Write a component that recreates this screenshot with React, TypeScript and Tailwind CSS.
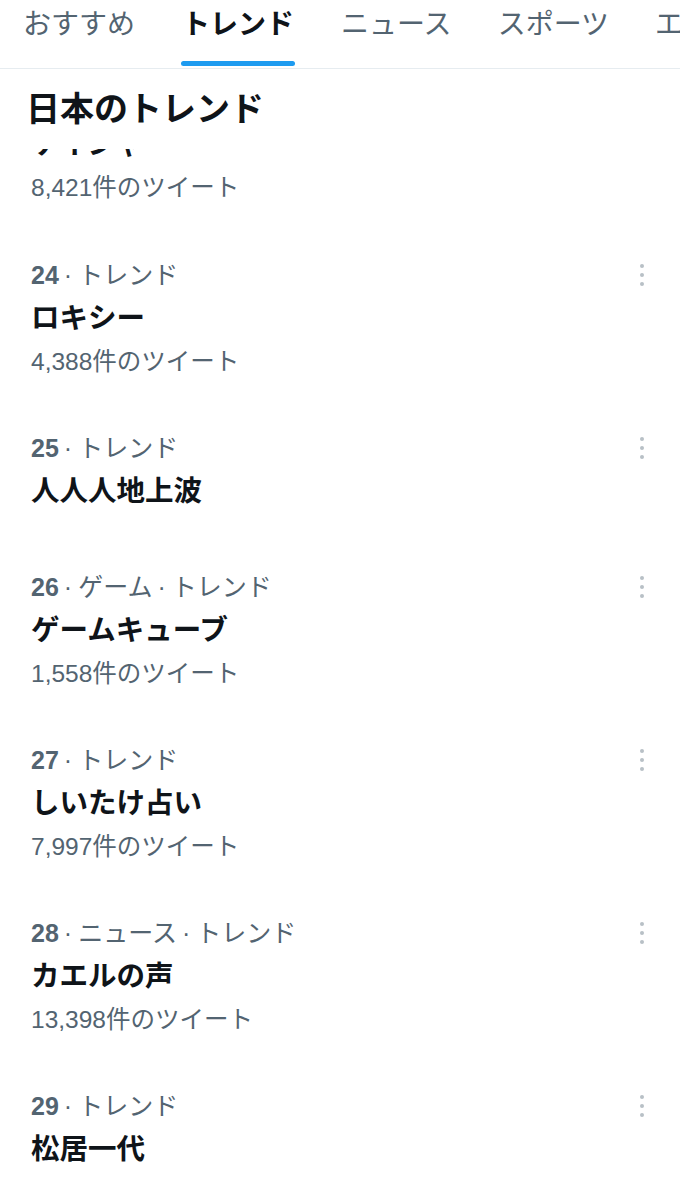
import { Fragment } from "react";

const font = { fontFamily: '"Liberation Sans", "Noto Sans CJK JP", sans-serif' };

type Trend = {
  rank: number;
  tags: string[];
  title: string;
  count?: string;
};

const trends: Trend[] = [
  { rank: 24, tags: ["トレンド"], title: "ロキシー", count: "4,388件のツイート" },
  { rank: 25, tags: ["トレンド"], title: "人人人地上波" },
  { rank: 26, tags: ["ゲーム", "トレンド"], title: "ゲームキューブ", count: "1,558件のツイート" },
  { rank: 27, tags: ["トレンド"], title: "しいたけ占い", count: "7,997件のツイート" },
  { rank: 28, tags: ["ニュース", "トレンド"], title: "カエルの声", count: "13,398件のツイート" },
  { rank: 29, tags: ["トレンド"], title: "松居一代" },
];

const tabs = ["おすすめ", "トレンド", "ニュース", "スポーツ", "エンタメ"];

function MoreIcon() {
  return (
    <div className="flex flex-col items-center gap-[4.5px] pt-[4px]">
      <span className="w-[4.5px] h-[4.5px] rounded-full bg-[#b8c0c6]" />
      <span className="w-[4.5px] h-[4.5px] rounded-full bg-[#b8c0c6]" />
      <span className="w-[4.5px] h-[4.5px] rounded-full bg-[#b8c0c6]" />
    </div>
  );
}

function TrendItem({ trend }: { trend: Trend }) {
  return (
    <div className="flex pl-[31px] pr-[36px] pt-[23px] pb-[20px] min-h-[139px]">
      <div className="flex-1 flex flex-col">
        <div className="h-[44px] leading-[44px] text-[25px] text-[#536471] whitespace-nowrap">
          <span className="font-bold">{trend.rank}</span>
          {trend.tags.map((t) => (
            <Fragment key={t}>
              <span className="ml-[5px] mr-[6px]">·</span>
              <span>{t}</span>
            </Fragment>
          ))}
        </div>
        <div className="h-[43px] leading-[43px] text-[28.5px] font-semibold text-[#0f1419]">{trend.title}</div>
        {trend.count && (
          <div className="h-[43px] leading-[43px] text-[24.5px] text-[#536471]">{trend.count}</div>
        )}
      </div>
      <div className="h-[44px] flex items-center -mt-[2px]">
        <MoreIcon />
      </div>
    </div>
  );
}

export default function App() {
  return (
    <div className="w-[680px] h-[1194px] overflow-hidden bg-white" style={font}>
      {/* tabs */}
      <div className="flex h-[69px] pl-[23px] gap-[46px] border-b border-[#e6ecf0] overflow-hidden">
        {tabs.map((t, i) => (
          <div key={t} className="flex flex-col items-center shrink-0">
            <div
              className={
                "h-[50px] leading-[50px] text-[28px] whitespace-nowrap " +
                (i === 1 ? "font-semibold text-[#0f1419]" : "text-[#536471]")
              }
            >
              {t}
            </div>
            {i === 1 && <div className="mt-[11px] h-[5px] w-[114px] rounded-full bg-[#1d9bf0]" />}
          </div>
        ))}
      </div>

      {/* heading */}
      <div className="h-[80px] pl-[26px] pb-[1px] flex items-center">
        <h2 className="text-[34px] font-semibold text-[#0f1419] leading-none">日本のトレンド</h2>
      </div>

      {/* previous item, scrolled under the heading */}
      <div className="h-[81px] overflow-hidden flex flex-col justify-end pl-[31px] pb-[21px]">
        <div className="h-[43px] leading-[43px] text-[28.5px] font-semibold text-[#0f1419] shrink-0">ケイジャ</div>
        <div className="h-[43px] leading-[43px] text-[24.5px] text-[#536471] shrink-0">8,421件のツイート</div>
      </div>

      {trends.map((t) => (
        <TrendItem key={t.rank} trend={t} />
      ))}
    </div>
  );
}
